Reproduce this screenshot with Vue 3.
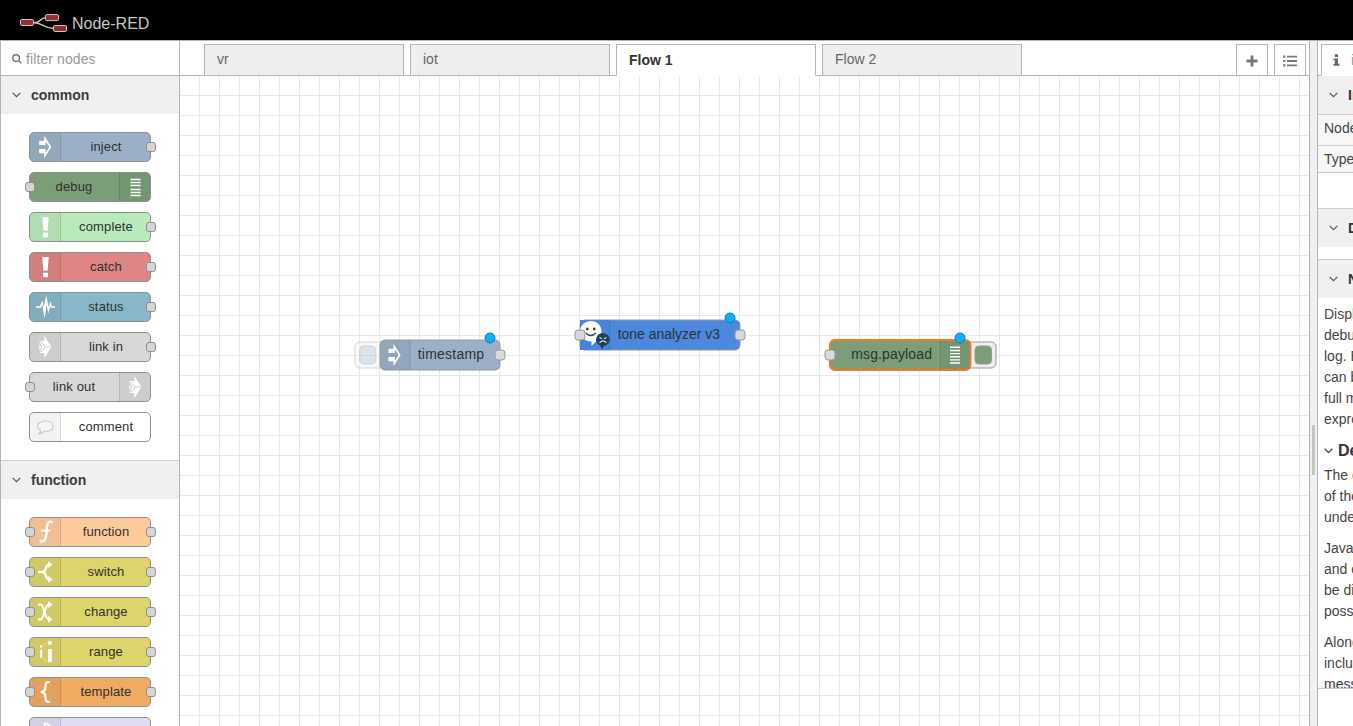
<script setup>
const categories = [
  {
    name: 'common',
    nodes: [
      { label: 'inject', color: '#9bb0c7', icon: 'inject', output: true },
      { label: 'debug', color: '#7b9e79', icon: 'debug', input: true, right: true },
      { label: 'complete', color: '#b8eabb', icon: 'alert', output: true },
      { label: 'catch', color: '#de8585', icon: 'alert', output: true },
      { label: 'status', color: '#88b8c8', icon: 'status', output: true },
      { label: 'link in', color: '#d8d8d8', icon: 'link', output: true },
      { label: 'link out', color: '#d8d8d8', icon: 'link', input: true, right: true },
      { label: 'comment', color: '#ffffff', icon: 'comment' }
    ]
  },
  {
    name: 'function',
    nodes: [
      { label: 'function', color: '#fdca9c', icon: 'function', input: true, output: true },
      { label: 'switch', color: '#ddd46b', icon: 'switch', input: true, output: true },
      { label: 'change', color: '#ddd46b', icon: 'change', input: true, output: true },
      { label: 'range', color: '#ddd46b', icon: 'range', input: true, output: true },
      { label: 'template', color: '#f0aa61', icon: 'template', input: true, output: true },
      { label: '', color: '#e1dcf4', icon: 'delay' }
    ]
  }
]

const tabs = [
  { label: 'vr' },
  { label: 'iot' },
  { label: 'Flow 1', active: true },
  { label: 'Flow 2' }
]

const icons = {
  inject: [{ d: 'M14.2 3.8L21.3 15L14.2 26.2V21.2H9.2V17H15.6V21L19.4 15L15.6 9V13H9.2V8.8H14.2Z', fill: true }],
  debug: [{ d: 'M10.5 7.5H20.5M10.5 10.5H20.5M10.5 13.5H20.5M10.5 17.5H20.5M10.5 20.5H20.5M10.5 23.5H20.5', w: 1.4 }],
  alert: [{ d: 'M12.3 5H18.7L17.6 18.7H13.4ZM13 20.8H18V25.3H13Z', fill: true }],
  status: [{ d: 'M6 14.2H9.8L12.3 8.5L13.6 15L16.3 3L18.4 15L20.6 9.2L22 14.2H25V15.8H20.9L20.3 14.2L18.4 21.5L16.5 12.5L14.7 26.5L12.2 12.8L10.8 15.8H6Z', fill: true }],
  link: [
    { d: 'M14.3 3.8L21.3 15L14.3 26.2V21H9.3V9H14.3Z', fill: true },
    { d: 'M9 11.5A3.8 3.8 0 0 1 9 18.6', w: 1.1, cut: true },
    { d: 'M9 10.2A5 5 0 0 1 14.4 14.9H20.3M9 19.9A5 5 0 0 0 14.4 15', w: 1, cut: true }
  ],
  function: [{ d: 'M22 6.2C21.3 4.2 18.3 4 17.4 7.2C16.4 11 17.2 16 15.6 21C14.5 24.8 11.2 25.4 10.3 23', w: 2.3 }, { d: 'M11 13.6H20.6', w: 1.8 }],
  switch: [{ d: 'M8.4 15H13.4C16.2 14 15.2 7.5 19.4 7.5M13.4 15C16.2 16 15.2 22.4 19.4 22.4', w: 2.5 }, { d: 'M18.2 3.9L22.5 7.5L18.2 11.1ZM18.2 18.8L22.5 22.4L18.2 26Z', fill: true }],
  change: [{ d: 'M8 7.5H11C14.2 8.5 14 21.4 18.8 22.4', w: 2.1 }, { d: 'M8 22.4H11C14.2 21.4 14 8.5 18.8 7.5', w: 2.1 }, { d: 'M18 3.9L22.5 7.5L18 11.1ZM18 18.8L22.5 22.4L18 26Z', fill: true }],
  range: [{ d: 'M10 8.3H12.2V10.6H10ZM10.3 12.6H12.2V21H10.3ZM18 4.3H21.8V7.8H18ZM18 12H21.8V25.2H18Z', fill: true }, { d: 'M13 8.2L17.4 5.8M13 21.7L17.4 24.4', w: 0.8, faint: true }],
  template: [{ d: 'M20 5.2C16.4 4.8 15.4 6 15.4 9C15.4 12.3 15.5 14 11 15C15.5 16 15.4 17.8 15.4 21C15.4 24 16.4 25.2 20 24.8', w: 2.2 }],
  delay: [{ d: 'M15.5 6L20 8.5M14.6 5.5V10', w: 2 }]
}

const chevron = 'M.7 .8L4.5 4.6L8.3 .8'

const paragraphs = [
  ['Displays selected', 'debug sidebar', 'log. By default', 'can be configured', 'full message', 'expression'],
  ['The debug', 'of the messages', 'understand'],
  ['JavaScript', 'and expanded', 'be displayed', 'possible'],
  ['Alongside', 'includes', 'message']
]
</script>

<template>
  <div class="editor">
    <header class="header">
      <svg class="logo" width="48" height="20" viewBox="0 0 48 20">
        <path d="M14 8.7C22 8.7 20 3.5 26 3.5M14 8.7C23 8.5 23 14.5 34 14.5" fill="none" stroke="#c5c5c5" stroke-width="1.4" />
        <g fill="#952e30" stroke="#d1c0c0" stroke-width="1">
          <rect x=".5" y="5.5" width="13" height="6" rx="1.4" />
          <rect x="25.5" y=".6" width="13" height="6" rx="1.4" />
          <rect x="33.5" y="11.5" width="13" height="6" rx="1.4" />
        </g>
      </svg>
      <span>Node-RED</span>
    </header>

    <main class="main">
      <aside class="palette">
        <div class="search">
          <svg width="10" height="10" viewBox="0 0 10 10"><path d="M6.8 6.8L9.3 9.3M7.5 4.1A3.4 3.4 0 1 1 .7 4.1A3.4 3.4 0 1 1 7.5 4.1" fill="none" stroke="#777" stroke-width="1.4" /></svg>
          <span>filter nodes</span>
        </div>
        <section v-for="cat in categories" :key="cat.name" class="category">
          <div class="cat-head">
            <svg width="9" height="6" viewBox="0 0 9 6"><path :d="chevron" fill="none" stroke="#555" stroke-width="1.2" /></svg>
            <span>{{ cat.name }}</span>
          </div>
          <div class="cat-body">
            <div v-for="n in cat.nodes" :key="n.icon + n.label" class="node" :class="{ right: n.right }" :style="{ background: n.color }">
              <div class="icon">
                <svg width="30" height="30" viewBox="0 0 30 30">
                  <path v-if="n.icon === 'comment'" d="M15.5 9C20 9 23 11.2 23 14.2C23 17.3 20 19.3 15.5 19.3L14.3 19.2C12.7 21 10.8 21.8 8.8 21.9C10 21 10.6 19.8 10.4 18.2C8.7 17.3 7.7 15.9 7.7 14.2C7.7 11.2 11 9 15.5 9Z" fill="#f6f6f6" stroke="#c8c8c8" stroke-width="1.1" />
                  <template v-else>
                    <path v-for="(p, i) in icons[n.icon]" :key="i" :d="p.d" :fill="p.fill ? '#fff' : 'none'" :stroke="p.fill ? 'none' : p.cut ? '#cdcdcd' : '#fff'" :stroke-width="p.w" :opacity="p.faint ? 0.6 : 1" />
                  </template>
                </svg>
              </div>
              <span class="label">{{ n.label }}</span>
              <i v-if="n.input" class="port in"></i>
              <i v-if="n.output" class="port out"></i>
            </div>
          </div>
        </section>
      </aside>

      <section class="workspace">
        <nav class="tabs">
          <div v-for="t in tabs" :key="t.label" class="tab" :class="{ active: t.active }">{{ t.label }}</div>
          <div class="tab-tools">
            <div class="tool"><svg width="12" height="12" viewBox="0 0 12 12"><path d="M6 .5V11.5M.5 6H11.5" stroke="#777" stroke-width="2.8" /></svg></div>
            <div class="tool"><svg width="14" height="12" viewBox="0 0 14 12"><path d="M0 1.7H2.4M0 6H2.4M0 10.3H2.4" stroke="#808080" stroke-width="2.2" /><path d="M4 1.7H14M4 6H14M4 10.3H14" stroke="#777" stroke-width="1.8" /></svg></div>
          </div>
        </nav>
        <svg class="canvas" width="1129" height="650" viewBox="180 76 1129 650">
          <defs>
            <pattern id="grid" x="180" y="76" width="20" height="20" patternUnits="userSpaceOnUse">
              <path d="M19.5 0V20M0 19.5H20" stroke="#e8e8e8" stroke-width="1" />
            </pattern>
          </defs>
          <rect x="180" y="76" width="1129" height="650" fill="url(#grid)" />

          <g stroke="#999">
            <g opacity=".4">
              <rect x="355" y="342" width="32" height="26" rx="5" fill="#eee" />
              <rect x="359.8" y="346" width="16" height="18" rx="4" fill="#a6bbcf" />
            </g>
            <rect x="380" y="340" width="120" height="30" rx="5" fill="#9bb0c7" />
          </g>
          <path d="M385 340.5H410V369.5H385Q380.5 369.5 380.5 365V345Q380.5 340.5 385 340.5Z" fill="#000" opacity=".05" />
          <path d="M410 340.5V369.5" stroke="#000" opacity=".12" />
          <path :d="icons.inject[0].d" transform="translate(379.3 340)" fill="#fff" />
          <text x="417.7" y="359" textLength="66.4">timestamp</text>

          <rect x="580" y="320" width="160" height="30" rx="5" fill="#4b89df" stroke="#999" />
          <rect x="580" y="320" width="30" height="30" fill="#4785da" />
          <path d="M610 320.5V349.5" stroke="#000" opacity=".1" />
          <path d="M591 321C597 321 601.5 325.5 601.5 331.3C601.5 337.5 597 340.5 591.5 346V341.5C585 341.5 580 337 580 331.3C580 325.5 585 321 591 321Z" fill="#fff" />
          <circle cx="587.3" cy="329" r="1.4" fill="#264d63" /><circle cx="594.2" cy="329" r="1.4" fill="#264d63" />
          <path d="M585.8 333Q590.8 338 595.8 333" fill="none" stroke="#264d63" stroke-width="1.5" />
          <path d="M603 333.3A6.3 6.3 0 0 1 603.5 346L602.6 349.5L599.8 345.3A6.3 6.3 0 0 1 603 333.3Z" fill="#203f55" />
          <path d="M599.5 337.4L602 338.8M606.5 337.4L604 338.8M599.5 342.8Q603 339 606.5 342.8" fill="none" stroke="#d5e2ef" stroke-width="1.1" />
          <text x="617.7" y="339" textLength="102.4">tone analyzer v3</text>

          <rect x="965" y="342" width="31" height="26" rx="5" fill="#eee" stroke="#999" />
          <rect x="975" y="346" width="16.5" height="18" rx="4" fill="#7b9e79" stroke="#999" />
          <rect x="829.8" y="340" width="140.7" height="30" rx="5" fill="#7b9e79" stroke="#ff7420" stroke-width="1.8" />
          <path d="M940 341H965Q969.5 341 969.5 345V365Q969.5 369 965 369H940Z" fill="#000" opacity=".05" />
          <path d="M940 341V369" stroke="#000" opacity=".1" />
          <path d="M950 347.3H960M950 350.5H960M950 353.6H960M950 356.8H960M950 359.9H960M950 363H960" stroke="#fff" stroke-width="1.4" />
          <text x="851.2" y="359" textLength="80.8">msg.payload</text>

          <g fill="#d9d9d9" stroke="#999">
            <rect x="495" y="350" width="10" height="10" rx="3" />
            <rect x="575" y="330" width="10" height="10" rx="3" />
            <rect x="735" y="330" width="10" height="10" rx="3" />
            <rect x="825" y="350" width="10" height="10" rx="3" />
          </g>
          <g fill="#0bb0fa" stroke="#167aa5">
            <circle cx="490" cy="338" r="5" />
            <circle cx="730" cy="318" r="5" />
            <circle cx="960" cy="338" r="5" />
          </g>
        </svg>
      </section>

      <div class="separator"><i></i></div>

      <aside class="sidebar">
        <div class="side-tabs">
          <div class="side-tab">
            <svg width="7" height="12" viewBox="0 0 7 12"><path d="M1.8 .3H5V3H1.8ZM.6 4.4H5V9.8H6.4V11.7H.6V9.8H1.9V6.3H.6Z" fill="#666" /></svg>
            <span>i</span>
          </div>
        </div>
        <div class="side-head first"><svg width="9" height="6" viewBox="0 0 9 6"><path :d="chevron" fill="none" stroke="#555" stroke-width="1.2" /></svg><span>Information</span></div>
        <div class="row">Node</div>
        <div class="row type">Type</div>
        <div class="side-head desc"><svg width="9" height="6" viewBox="0 0 9 6"><path :d="chevron" fill="none" stroke="#555" stroke-width="1.2" /></svg><span>Description</span></div>
        <div class="side-head help"><svg width="9" height="6" viewBox="0 0 9 6"><path :d="chevron" fill="none" stroke="#555" stroke-width="1.2" /></svg><span>Node Help</span></div>
        <div class="help-text">
          <template v-for="(p, i) in paragraphs" :key="i">
            <h3 v-if="i === 1"><svg width="9" height="6" viewBox="0 0 9 6"><path :d="chevron" fill="none" stroke="#444" stroke-width="1.3" /></svg>Details</h3>
            <p><span v-for="line in p" :key="line">{{ line }}</span></p>
          </template>
        </div>
        <div class="side-foot"></div>
      </aside>
    </main>
  </div>
</template>

<style>
body { overflow: hidden; }
</style>

<style scoped>
* { box-sizing: border-box; }
.editor { width: 1353px; height: 726px; overflow: hidden; display: flex; flex-direction: column; background: #fff; color: #444; font: 14px/20px "Liberation Sans", Arial, sans-serif; }
svg { display: block; flex: none; }
.header { height: 40px; flex: none; background: #000; display: flex; align-items: flex-start; padding: 14px 0 0 20px; gap: 4px; color: #c7c7c7; font-size: 16px; line-height: 19px; }
.main { flex: 1; min-height: 0; display: flex; }
.palette { width: 180px; flex: none; border: solid #b4b4b4; border-width: 1px 1px 0; overflow: hidden; }
.search { height: 35px; border-bottom: 1px solid #b4b4b4; display: flex; align-items: center; padding: 1px 0 0 11px; gap: 4px; color: #999; letter-spacing: .1px; }
.category { border-bottom: 1px solid #ccc; }
.cat-head { height: 38px; background: #f0f0f0; display: flex; align-items: center; padding-left: 11px; gap: 10px; font-weight: bold; color: #3c3c3c; }
.cat-body { padding: 18px 0 18px 28px; display: flex; flex-direction: column; gap: 10px; }
.node { position: relative; width: 122px; height: 30px; border: 1px solid #909090; border-radius: 5px; display: flex; align-items: stretch; }
.node.right { flex-direction: row-reverse; }
.icon { width: 31px; background: rgba(0, 0, 0, .05); border-right: 1px solid rgba(0, 0, 0, .1); border-radius: 4px 0 0 4px; }
.icon svg { margin-top: -1px; }
.right .icon { border-right: 0; border-left: 1px solid rgba(0, 0, 0, .1); border-radius: 0 4px 4px 0; }
.label { flex: 1; padding-left: 1px; text-align: center; font-size: 13px; line-height: 27px; color: #303030; letter-spacing: .14px; }
.right .label { padding: 0 1px 0 0; }
.port { position: absolute; top: 9px; width: 10px; height: 10px; border: 1px solid #909090; border-radius: 3px; background: #d5d5d5; }
.port.in { left: -5px; }
.port.out { right: -6px; }
.workspace { width: 1129px; flex: none; border-top: 1px solid #b4b4b4; }
.tabs { height: 35px; display: flex; gap: 6px; padding: 3px 3px 0 24px; box-shadow: inset 0 -1px #b4b4b4; }
.tab { width: 200px; height: 32px; border: 1px solid #b4b4b4; background: #eee; padding: 4px 12px; color: #666; }
.tab.active { background: #fff; border-bottom-color: #fff; color: #333; font-weight: bold; padding-top: 5px; }
.tab-tools { margin-left: auto; display: flex; gap: 6px; }
.tool { width: 32px; height: 32px; border: 1px solid #b4b4b4; display: flex; align-items: center; justify-content: center; padding-top: 1px; }
.canvas text { font: 14px "Liberation Sans", Arial, sans-serif; fill: #303030; }
.separator { width: 8px; flex: none; border: solid #b4b4b4; border-width: 1px 0 0 1px; background: #f0f0f0; display: flex; align-items: center; padding: 132px 0 0 2px; }
.separator i { width: 3px; height: 50px; background: #c2c2c2; }
.sidebar { flex: 1; min-width: 0; border: solid #b4b4b4; border-width: 1px 0 0 1px; overflow: hidden; display: flex; flex-direction: column; white-space: nowrap; }
.side-tabs { height: 35px; flex: none; padding: 3px 0 0 3px; box-shadow: inset 0 -1px #b4b4b4; }
.side-tab { width: 80px; height: 32px; border: 1px solid #b4b4b4; border-bottom-color: #fff; background: #fff; display: flex; align-items: center; padding: 0 0 0 11px; gap: 11px; color: #999; }
.side-head { width: 120px; height: 39px; flex: none; border-top: 1px solid #ccc; background: #f0f0f0; display: flex; align-items: center; padding-left: 11px; gap: 10px; font-weight: bold; color: #333; }
.side-head.first { height: 38px; border-top: 0; }
.row { height: 31px; flex: none; border-top: 1px solid #ccc; background: #f7f7f7; padding: 3px 6px; color: #444; }
.row.type { height: 28px; border-bottom: 1px solid #ccc; }
.desc { margin-top: 35px; }
.help { margin-top: 12px; }
.help-text { height: 390px; flex: none; padding: 6px 0 0 6px; overflow: hidden; }
.help-text p { margin: 0 0 10px; display: flex; flex-direction: column; line-height: 21px; }
.help-text h3 { margin: 0 0 4px; height: 21px; font-size: 16px; line-height: 21px; display: flex; align-items: center; gap: 5px; color: #333; }
.side-foot { flex: 1; border-top: 1px solid #ccc; background: #fff; box-shadow: 0 -3px 8px rgba(0, 0, 0, .08); }
</style>
